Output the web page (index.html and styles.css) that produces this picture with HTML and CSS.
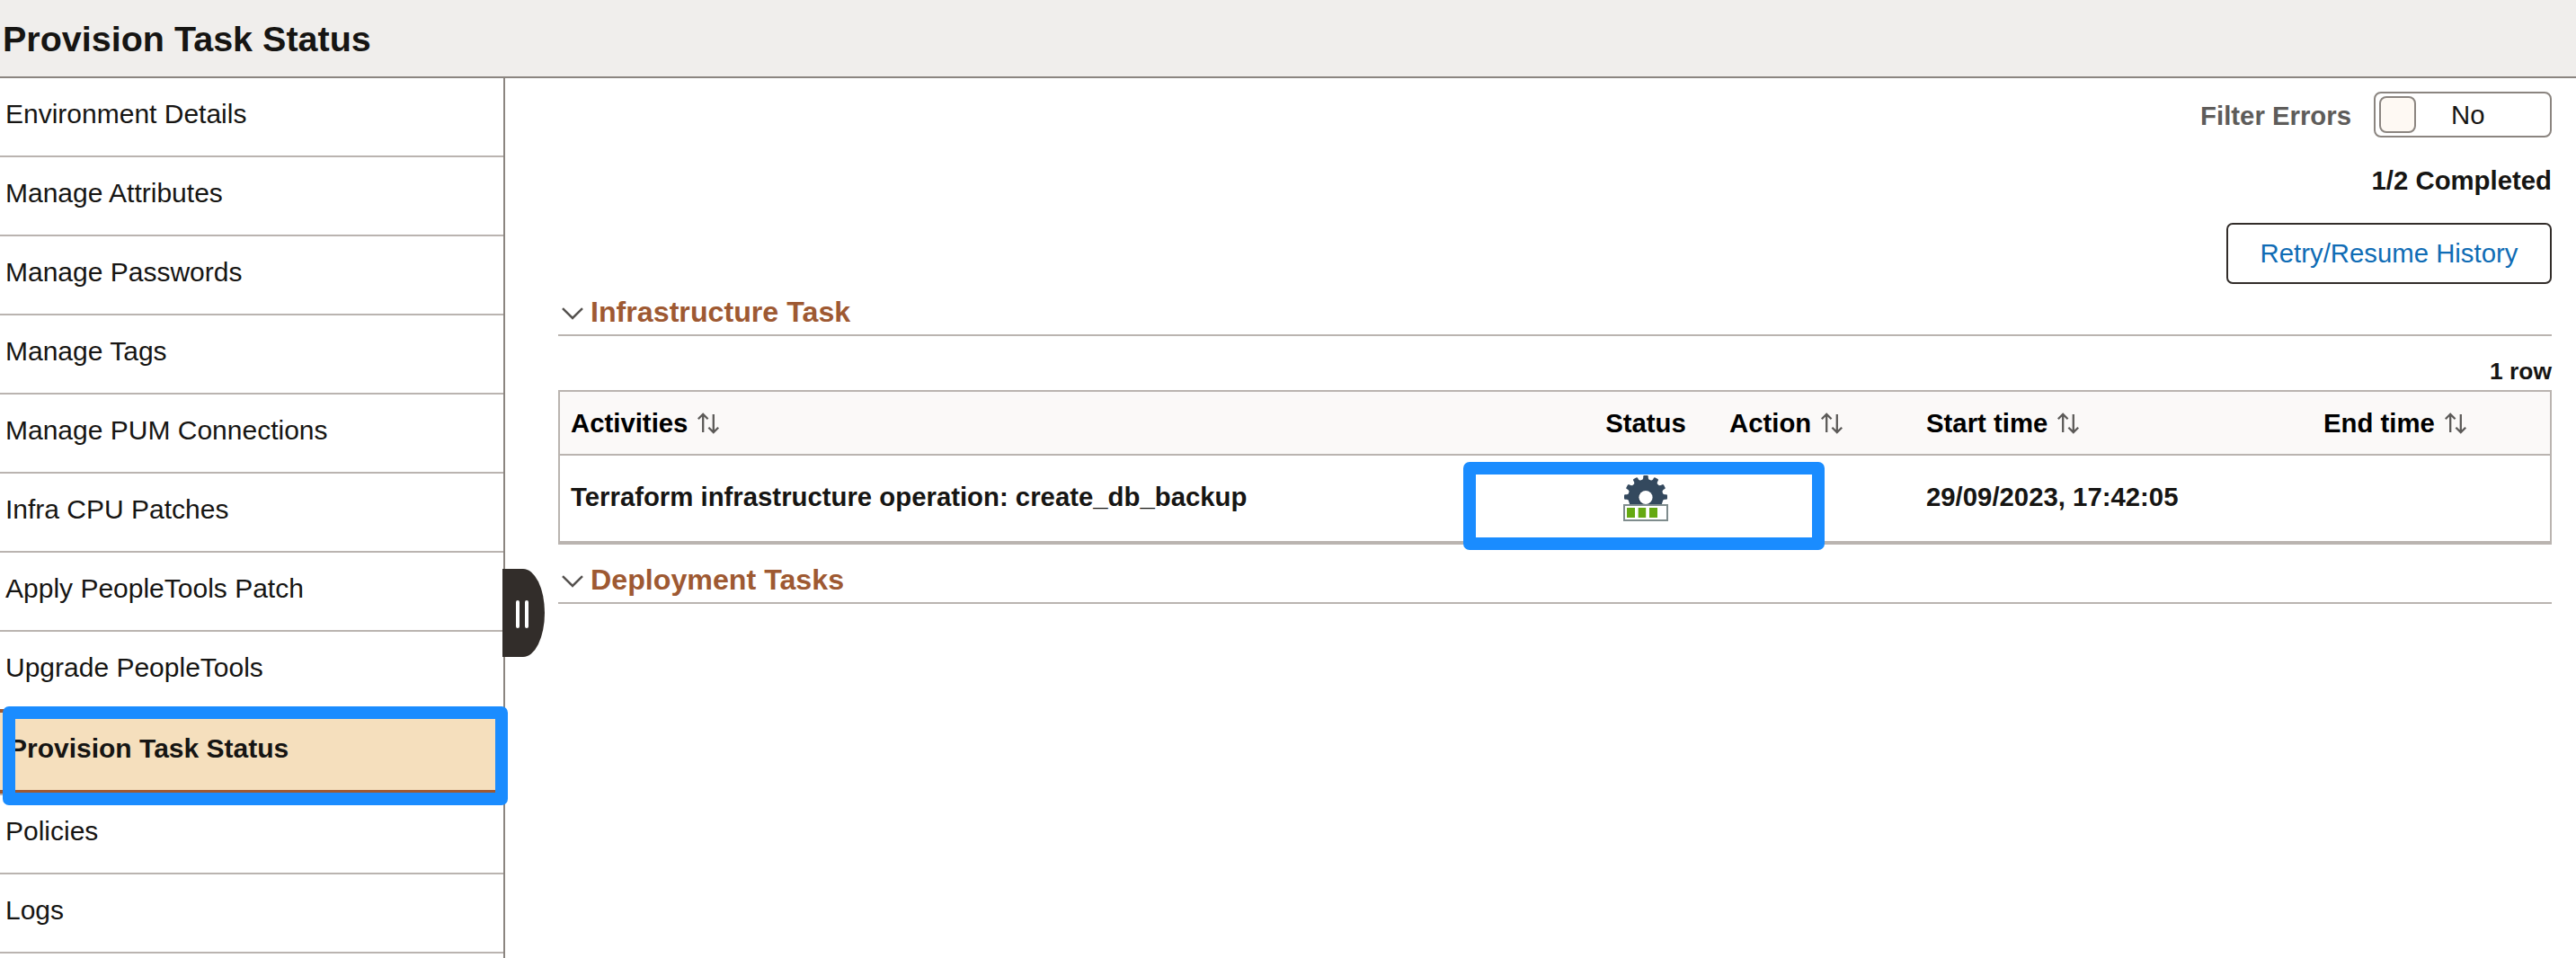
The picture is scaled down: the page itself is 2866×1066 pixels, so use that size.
FILE: index.html
```html
<!DOCTYPE html>
<html lang="en">
<head>
<meta charset="utf-8">
<title>Provision Task Status</title>
<link rel="stylesheet" href="styles.css">
</head>
<body>
<svg class="defs" aria-hidden="true">
  <symbol id="sort" viewBox="0 0 24 24">
    <path d="M6.200 22V2M0.800 7.300L6.200 1.900L11.600 7.300M17.800 2V22M12.400 16.700L17.800 22.100L23.200 16.700" fill="none" stroke="currentColor" stroke-width="2.300"/>
  </symbol>
  <symbol id="chevron" viewBox="0 0 24 14">
    <path d="M1 1.200L12 12L23 1.200" fill="none" stroke="currentColor" stroke-width="2.500"/>
  </symbol>
</svg>
<header class="page-header"><h1 class="page-title">Provision Task Status</h1></header>
<div class="layout">
  <nav class="sidebar">
    <a class="nav-item">Environment Details</a>
    <a class="nav-item">Manage Attributes</a>
    <a class="nav-item">Manage Passwords</a>
    <a class="nav-item">Manage Tags</a>
    <a class="nav-item">Manage PUM Connections</a>
    <a class="nav-item">Infra CPU Patches</a>
    <a class="nav-item">Apply PeopleTools Patch</a>
    <a class="nav-item nav-before">Upgrade PeopleTools</a>
    <div class="nav-current"><a class="nav-item nav-selected">Provision Task Status</a><span class="mark mark-nav"></span></div>
    <a class="nav-item">Policies</a>
    <a class="nav-item">Logs</a>
    <div class="handle"><span class="grip"></span><span class="grip"></span></div>
  </nav>
  <main class="content">
    <div class="filter">
      <span class="filter-label">Filter Errors</span>
      <div class="toggle"><span class="knob"></span><span class="toggle-text">No</span></div>
    </div>
    <div class="progress">1/2 Completed</div>
    <button class="history">Retry/Resume History</button>
    <h2 class="section"><svg class="chevron"><use href="#chevron"/></svg>Infrastructure Task</h2>
    <div class="count">1 row</div>
    <div class="table">
      <div class="row head">
        <div class="cell">Activities<svg class="sort"><use href="#sort"/></svg></div>
        <div class="cell status">Status</div>
        <div class="cell">Action<svg class="sort"><use href="#sort"/></svg></div>
        <div class="cell">Start time<svg class="sort"><use href="#sort"/></svg></div>
        <div class="cell">End time<svg class="sort"><use href="#sort"/></svg></div>
      </div>
      <div class="row body">
        <div class="cell">Terraform infrastructure operation: create_db_backup</div>
        <div class="cell status">
          <svg class="gear" viewBox="0 0 50 52">
            <g fill="#34495e">
              <circle cx="25" cy="25" r="19.500"/>
              <path id="tooth" d="M20.500 8L22.200 4V2.200Q22.200 1 23.400 1H26.600Q27.800 1 27.800 2.200V4L29.500 8Z"/>
              <use href="#tooth" transform="rotate(30 25 25)"/>
              <use href="#tooth" transform="rotate(60 25 25)"/>
              <use href="#tooth" transform="rotate(90 25 25)"/>
              <use href="#tooth" transform="rotate(-30 25 25)"/>
              <use href="#tooth" transform="rotate(-60 25 25)"/>
              <use href="#tooth" transform="rotate(-90 25 25)"/>
            </g>
            <circle cx="24.500" cy="26" r="8" fill="#2c3e50"/>
            <circle cx="25" cy="25.500" r="7.600" fill="#fff"/>
            <path d="M0 33H50V52H0Z" fill="#fff"/>
            <rect x="1" y="34" width="48" height="17" fill="#fff" stroke="#7f8c8d" stroke-width="2"/>
            <path d="M4 37h9v11H4zM16.700 37h8.500v11h-8.500zM29 37h9v11h-9z" fill="#65a912"/>
          </svg>
        </div>
        <div class="cell"></div>
        <div class="cell">29/09/2023, 17:42:05</div>
        <div class="cell"></div>
        <span class="mark mark-status"></span>
      </div>
    </div>
    <h2 class="section section-last"><svg class="chevron"><use href="#chevron"/></svg>Deployment Tasks</h2>
  </main>
</div>
</body>
</html>
```
FILE: styles.css
```css
* { box-sizing: border-box; }
body {
  margin: 0;
  height: 1066px;
  overflow: hidden;
  display: flex;
  flex-direction: column;
  background: #fff;
  color: #161513;
  font: 29.33px "Liberation Sans", Arial, sans-serif;
}
.defs { position: absolute; width: 0; height: 0; }
.page-header {
  flex: none;
  height: 87px;
  background: #f0eeec;
  border-bottom: 2px solid #8b8580;
}
.page-title { margin: 0; padding-left: 3px; font-size: 39.500px; line-height: 86px; }
.layout { flex: 1; display: flex; min-height: 0; }

.sidebar {
  position: relative;
  flex: none;
  width: 562px;
  border-right: 2px solid #8b8580;
  font-size: 30px;
}
.nav-item {
  display: block;
  height: 88px;
  padding-left: 6px;
  line-height: 79px;
  border-bottom: 2px solid #bab4b0;
}
.nav-before { height: 86px; border-bottom: 0; }
.nav-current { position: relative; border-bottom: 2px solid #bab4b0; }
.nav-selected {
  height: 94px;
  padding-left: 10px;
  background: #f5dfbd;
  border-top: 4px solid #9e5932;
  border-bottom: 4px solid #9e5932;
  font-weight: bold;
}
.handle {
  position: absolute;
  left: 559px;
  top: 546px;
  width: 47px;
  height: 98px;
  padding: 2px 4px 0 0;
  display: flex;
  align-items: center;
  justify-content: center;
  gap: 6px;
  background: #322d2a;
  border-radius: 0 24px 24px 0 / 0 49px 49px 0;
}
.grip { width: 4px; height: 31px; border-radius: 2px; background: #fff; }

.mark { position: absolute; border: 14px solid #1a8cff; border-radius: 7px; }
.mark-nav { left: 3px; top: -3px; width: 562px; height: 110px; }
.mark-status { left: 1005px; top: 7px; width: 402px; height: 98px; }

.content {
  flex: 1;
  display: flex;
  flex-direction: column;
  padding: 15px 27px 0 59px;
}
.filter { display: flex; align-items: flex-start; justify-content: flex-end; gap: 25px; height: 51px; }
.filter-label { color: #5e5c5a; font-weight: bold; line-height: 54px; }
.toggle {
  display: flex;
  width: 198px;
  height: 51px;
  padding: 3px 4px;
  border: 2px solid #8b8580;
  border-radius: 8px;
}
.knob { width: 41px; height: 41px; background: #fef9f3; border: 2px solid #8b8580; border-radius: 8px; }
.toggle-text { padding-left: 39px; line-height: 42px; }
.progress { margin-top: 28px; text-align: right; font-weight: bold; line-height: 40px; }
.history {
  align-self: flex-end;
  width: 362px;
  height: 68px;
  margin-top: 27px;
  padding: 0;
  background: #fff;
  border: 2px solid #322d2a;
  border-radius: 7px;
  color: #0f6cb5;
  font: inherit;
  line-height: 62px;
}
.section {
  display: flex;
  align-items: center;
  height: 54px;
  margin: 4px 0 0;
  padding: 2px 0 0 4px;
  gap: 8px;
  border-bottom: 2px solid #bab4b0;
  color: #9e5932;
  font-size: 32.200px;
  line-height: 52px;
}
.chevron { width: 24px; height: 14px; margin-top: 3px; color: #55524f; }
.count { margin-top: 20px; height: 40px; text-align: right; font-size: 26.400px; font-weight: bold; line-height: 38px; }
.table { border: 2px solid #bab4b0; border-bottom-width: 4px; font-weight: bold; }
.row { display: grid; grid-template-columns: 1144px 128px 236px 442px 1fr; }
.cell { display: flex; padding-left: 12px; }
.cell:nth-child(3) { padding-left: 29px; }
.head { height: 71px; background: #fbf9f8; border-bottom: 2px solid #bab4b0; color: #000; line-height: 69px; }
.body { position: relative; height: 95px; line-height: 91px; }
.cell.status { padding: 0; justify-content: center; }
.sort { width: 24px; height: 24px; margin: 23px 0 0 11px; color: #5c5a58; }
.gear { width: 50px; height: 52px; margin-top: 21px; }
.section-last { margin-top: 12px; }
```
